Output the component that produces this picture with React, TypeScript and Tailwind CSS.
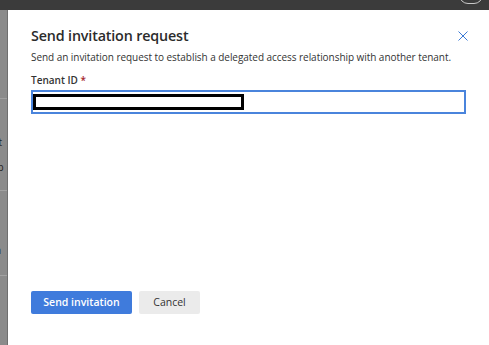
import React from "react";

export default function App() {
  const font = { fontFamily: '"Open Sans", "Noto Sans", sans-serif' };
  return (
    <div className="w-[489px] h-[345px] flex flex-col overflow-hidden bg-white" style={font}>
      <div className="relative h-[10px] bg-[#3b3b3b] shrink-0">
        <div className="absolute left-[459px] top-[-14px] w-[24px] h-[18px] rounded-full border border-[#c8c8c8]" />
      </div>
      <div className="flex flex-1">
        <div className="w-[8px] shrink-0 bg-[#8b8b8b] relative overflow-hidden text-[10px] text-[#1e1e1e] border-r border-[#6f6f6f]">
          <div className="absolute left-0 top-[88px] w-full h-[1px] bg-[#a0a0a0]" />
          <div className="absolute left-[-4px] top-[127px] leading-none">it</div>
          <div className="absolute left-[-8px] top-[152px] leading-none">ep</div>
          <div className="absolute left-0 top-[180px] w-full h-[1px] bg-[#a2a2a2]" />
          <div className="absolute left-[-5px] top-[235px] leading-none">n</div>
          <div className="absolute left-0 top-[265px] w-full h-[1px] bg-[#a2a2a2]" />
        </div>
        <div className="flex-1 bg-white flex flex-col pl-[23px] pr-[24px] pt-[16px] relative">
          <button className="absolute right-[22px] top-[21px] text-[#3b7ad6]">
            <svg width="10" height="10" viewBox="0 0 10 10">
              <path d="M0.5 0.5 L9.5 9.5 M9.5 0.5 L0.5 9.5" stroke="currentColor" strokeWidth="1" fill="none" />
            </svg>
          </button>
          <div className="text-[14.3px] font-semibold text-[#2b2b2b] leading-[20px] tracking-[-0.15px]">Send invitation request</div>
          <div className="text-[10px] text-[#333] leading-[14px] mt-[4px] tracking-[-0.05px] whitespace-nowrap">
            Send an invitation request to establish a delegated access relationship with another tenant.
          </div>
          <div className="text-[10px] font-semibold text-[#333] leading-[14px] mt-[9px]">
            Tenant ID <span className="text-[#a4262c]">*</span>
          </div>
          <div className="mt-[3px] w-[435px] h-[24px] border-2 border-[#4a84dc] flex items-center pl-[0px]">
            <div className="w-[211px] h-[16px] border-[3px] border-black bg-white" />
          </div>
          <div className="flex-1" />
          <div className="flex gap-[7px] mb-[31px]">
            <button className="w-[101px] h-[23px] bg-[#3f7bdc] text-white text-[10.5px] font-semibold rounded-[2px]">
              Send invitation
            </button>
            <button className="w-[61px] h-[23px] bg-[#ebebeb] text-[#333] text-[10.5px] rounded-[2px]">
              Cancel
            </button>
          </div>
        </div>
      </div>
    </div>
  );
}
